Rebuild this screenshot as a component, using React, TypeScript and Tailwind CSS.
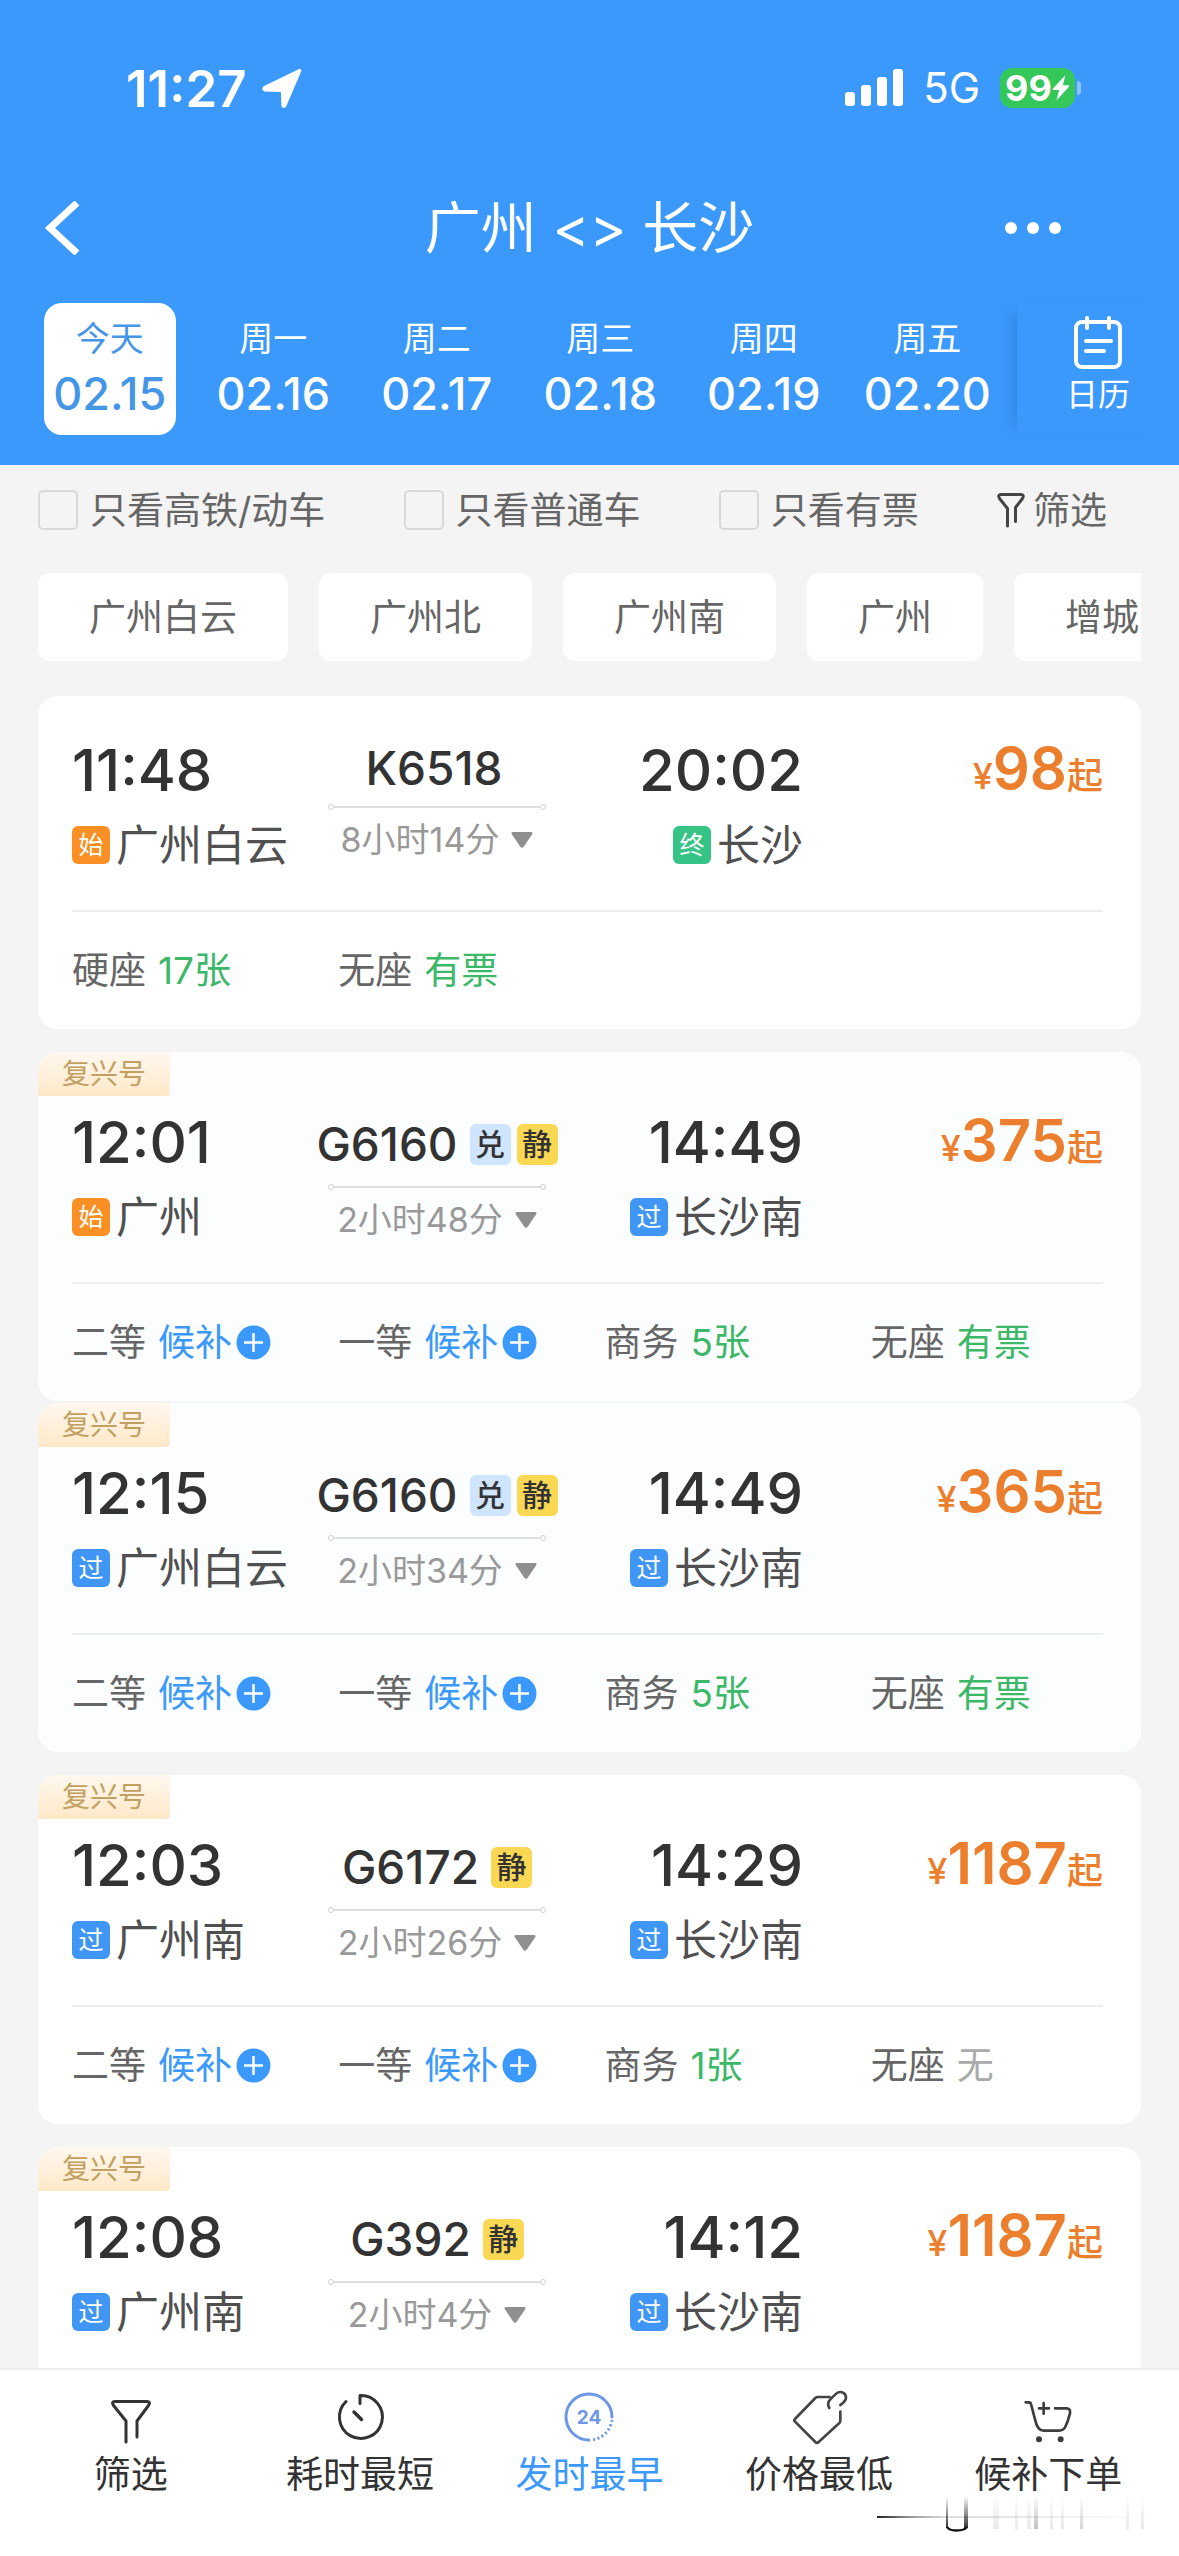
import React, { useState } from 'react';

type StationKind = 'start' | 'pass' | 'end';
type SeatState = 'available' | 'waitlist' | 'none';

interface Station {
  kind: StationKind;
  name: string;
  time: string;
}

interface Seat {
  name: string;
  value: string;
  state: SeatState;
}

interface Train {
  id: string;
  number: string;
  fuxing: boolean;
  exchange?: boolean;
  quiet?: boolean;
  duration: string;
  from: Station;
  to: Station;
  price: number;
  seats: Seat[];
  // same train, listed again from another boarding station
  joined?: boolean;
}

const DAYS = [
  { week: '今天', date: '02.15' },
  { week: '周一', date: '02.16' },
  { week: '周二', date: '02.17' },
  { week: '周三', date: '02.18' },
  { week: '周四', date: '02.19' },
  { week: '周五', date: '02.20' },
];

const QUICK_FILTERS = ['只看高铁/动车', '只看普通车', '只看有票'];

const STATIONS = ['广州白云', '广州北', '广州南', '广州', '增城'];

const TRAINS: Train[] = [
  {
    id: 'k6518',
    number: 'K6518',
    fuxing: false,
    duration: '8小时14分',
    from: { kind: 'start', name: '广州白云', time: '11:48' },
    to: { kind: 'end', name: '长沙', time: '20:02' },
    price: 98,
    seats: [
      { name: '硬座', value: '17张', state: 'available' },
      { name: '无座', value: '有票', state: 'available' },
    ],
  },
  {
    id: 'g6160-gz',
    number: 'G6160',
    fuxing: true,
    exchange: true,
    quiet: true,
    duration: '2小时48分',
    from: { kind: 'start', name: '广州', time: '12:01' },
    to: { kind: 'pass', name: '长沙南', time: '14:49' },
    price: 375,
    seats: [
      { name: '二等', value: '候补', state: 'waitlist' },
      { name: '一等', value: '候补', state: 'waitlist' },
      { name: '商务', value: '5张', state: 'available' },
      { name: '无座', value: '有票', state: 'available' },
    ],
  },
  {
    id: 'g6160-by',
    number: 'G6160',
    fuxing: true,
    exchange: true,
    quiet: true,
    joined: true,
    duration: '2小时34分',
    from: { kind: 'pass', name: '广州白云', time: '12:15' },
    to: { kind: 'pass', name: '长沙南', time: '14:49' },
    price: 365,
    seats: [
      { name: '二等', value: '候补', state: 'waitlist' },
      { name: '一等', value: '候补', state: 'waitlist' },
      { name: '商务', value: '5张', state: 'available' },
      { name: '无座', value: '有票', state: 'available' },
    ],
  },
  {
    id: 'g6172',
    number: 'G6172',
    fuxing: true,
    quiet: true,
    duration: '2小时26分',
    from: { kind: 'pass', name: '广州南', time: '12:03' },
    to: { kind: 'pass', name: '长沙南', time: '14:29' },
    price: 1187,
    seats: [
      { name: '二等', value: '候补', state: 'waitlist' },
      { name: '一等', value: '候补', state: 'waitlist' },
      { name: '商务', value: '1张', state: 'available' },
      { name: '无座', value: '无', state: 'none' },
    ],
  },
  {
    id: 'g392',
    number: 'G392',
    fuxing: true,
    quiet: true,
    duration: '2小时4分',
    from: { kind: 'pass', name: '广州南', time: '12:08' },
    to: { kind: 'pass', name: '长沙南', time: '14:12' },
    price: 1187,
    seats: [],
  },
];

const STATION_BADGE: Record<StationKind, { label: string; className: string }> = {
  start: { label: '始', className: 'bg-[#fa8f24]' },
  pass: { label: '过', className: 'bg-[#3f96f5]' },
  end: { label: '终', className: 'bg-[#36c486]' },
};

const SEAT_COLOR: Record<SeatState, string> = {
  available: 'text-[#3cb868]',
  waitlist: 'text-[#3b99fc]',
  none: 'text-[#aaaaaa]',
};

/* ---------- icons ---------- */

const LocationIcon = () => (
  <svg className="h-10 w-[42px]" viewBox="0 0 44 42" fill="#fff" aria-hidden="true">
    <path d="M39.500 1.200 3.200 19c-3 1.600-2.200 5.600 1.200 5.700l15 .4c1 0 1.500.5 1.500 1.500l.4 12.400c.2 3.400 4 3.800 5.300.9L42 4c1-2.200-.6-3.700-2.500-2.800Z" />
  </svg>
);

const SignalIcon = () => (
  <svg className="h-[38px] w-[58px]" viewBox="0 0 58 38" fill="#fff" aria-hidden="true">
    <rect x="0" y="23" width="10" height="14" rx="3" />
    <rect x="16" y="16" width="10" height="21" rx="3" />
    <rect x="32" y="8" width="10" height="29" rx="3" />
    <rect x="48" y="0" width="10" height="37" rx="3" />
  </svg>
);

const BoltIcon = () => (
  <svg className="h-[26px] w-[18px]" viewBox="0 0 18 26" fill="#fff" aria-hidden="true">
    <path d="M13.500 0 1 13.500c-.7.8-.3 1.500.6 1.500h5.600L4.400 25.500 17 11.800c.7-.8.3-1.500-.6-1.500h-5.600Z" />
  </svg>
);

const CalendarIcon = () => (
  <svg className="h-14 w-[50px]" viewBox="0 0 50 56" fill="none" stroke="#fff" strokeWidth="4" strokeLinecap="round" aria-hidden="true">
    <rect x="3" y="7" width="44" height="45" rx="6" />
    <path d="M14 3v10M36 3v10M13 26h25M13 36h18" />
  </svg>
);

const FunnelIcon = () => (
  <svg className="h-9 w-7" viewBox="0 0 28 36" fill="none" stroke="#444" strokeWidth="3" strokeLinecap="round" strokeLinejoin="round" aria-hidden="true">
    <path d="M10.500 34V16.500L2.500 6.500Q0.500 2.500 4 2.500H24Q27.500 2.500 25.500 6.500L18.500 15.500V29.500" />
  </svg>
);

const NavFunnelIcon = () => (
  <svg className="h-[58px] w-[58px]" viewBox="0 0 58 58" fill="none" stroke="#333" strokeWidth="3" strokeLinecap="round" strokeLinejoin="round" aria-hidden="true">
    <path d="M24 54V33L11.500 17.500Q9 13.500 13 13.500H45Q49 13.500 46.500 17.500L35 33V49" />
  </svg>
);

const NavTimerIcon = () => (
  <svg className="h-[58px] w-[58px]" viewBox="0 0 58 58" fill="none" stroke="#333" strokeWidth="3" strokeLinecap="round" strokeLinejoin="round" aria-hidden="true">
    <path d="M29 15.500V7.500A21.500 21.500 0 1 1 15 13.500" />
    <path d="M23 24l7.500 7.500" strokeWidth="3.500" />
  </svg>
);

const NavClock24Icon = () => (
  <svg className="h-[58px] w-[58px]" viewBox="0 0 58 58" fill="none" stroke="#6d98e6" strokeWidth="3" aria-hidden="true">
    <path d="M29 52A23 23 0 1 1 52 29" strokeLinecap="round" />
    <path d="M52 32A23 23 0 0 1 31 52" strokeDasharray="2 2.500" />
    <text x="29" y="36" textAnchor="middle" fill="#6d98e6" stroke="none" fontSize="19" fontWeight="700">24</text>
  </svg>
);

const NavTagIcon = () => (
  <svg className="h-[58px] w-[58px]" viewBox="747 22 174 174" fill="none" stroke="#444" strokeWidth="8" strokeLinecap="round" strokeLinejoin="round" aria-hidden="true">
    <path d="M866 49H830Q826 49 823 52L762 115Q758 119 762 123L823 184Q828 189 833 184L895 127Q898 124 898 120V93" />
    <path d="M865 82C859 73 862 62 870 54L883 41C895 28 914 35 915 50C915 60 906 68 898 73" />
  </svg>
);

const NavCartIcon = () => (
  <svg className="h-[58px] w-[58px]" viewBox="478 24 174 174" fill="none" stroke="#3c3c3c" strokeWidth="8" strokeLinecap="round" strokeLinejoin="round" aria-hidden="true">
    <path d="M498 67H508Q513 67 514 72L527 122Q534 152 551 152H595Q610 152 616 142Q625 125 631 100Q633 86 622 85H586" />
    <path d="M552 69v32M538 85h30" />
    <circle cx="538" cy="178" r="5" fill="#3c3c3c" />
    <circle cx="603" cy="178" r="5" fill="#3c3c3c" />
  </svg>
);

const PlusBadge = () => (
  <svg className="h-[35px] w-[35px]" viewBox="0 0 35 35" aria-hidden="true">
    <circle cx="17.500" cy="17.500" r="17" fill="#3b99fc" />
    <path d="M17.500 8v19M8 17.500h19" stroke="#fff" strokeWidth="2.500" />
  </svg>
);

// faint streaks over the lower right of the tab bar
const Streaks = () => (
  <svg className="pointer-events-none absolute right-4 bottom-6 h-9 w-72" viewBox="0 0 288 36" aria-hidden="true">
    <defs>
      <linearGradient id="streak-h" x1="0" x2="1" y1="0" y2="0">
        <stop offset="0" stopColor="#222" />
        <stop offset="0.12" stopColor="#999" />
        <stop offset="0.25" stopColor="#ddd" />
        <stop offset="1" stopColor="#fff" />
      </linearGradient>
      <linearGradient id="streak-v" x1="0" x2="0" y1="0" y2="1">
        <stop offset="0" stopColor="#000" stopOpacity="0" />
        <stop offset="1" stopColor="#000" stopOpacity="0.800" />
      </linearGradient>
    </defs>
    <rect x="2" y="20" width="276" height="2" fill="url(#streak-h)" />
    <rect x="71" y="0" width="2" height="32" fill="url(#streak-v)" />
    <rect x="89" y="0" width="4" height="32" fill="url(#streak-v)" />
    <path d="M72 31Q74 34.500 81 34.500Q90 34.500 92 31" fill="none" stroke="#111" strokeWidth="2.500" />
    <g fill="url(#streak-v)" opacity="0.100">
      <rect x="118" y="0" width="6" height="33" />
      <rect x="140" y="0" width="3" height="33" />
      <rect x="152" y="0" width="4" height="33" />
      <rect x="175" y="0" width="3" height="33" />
      <rect x="186" y="0" width="3" height="33" />
      <rect x="251" y="0" width="3" height="33" />
      <rect x="266" y="0" width="3" height="33" />
    </g>
    <rect x="159" y="0" width="4" height="33" fill="url(#streak-v)" opacity="0.300" />
    <rect x="205" y="0" width="3" height="33" fill="url(#streak-v)" opacity="0.200" />
  </svg>
);

/* ---------- list ---------- */

const StationLabel: React.FC<{ station: Station }> = ({ station }) => {
  const badge = STATION_BADGE[station.kind];
  return (
    <div className="flex h-[50px] items-center gap-1.5 whitespace-nowrap">
      <span className={`flex h-[38px] w-[38px] shrink-0 items-center justify-center rounded-md text-[25px] leading-none text-white ${badge.className}`}>
        {badge.label}
      </span>
      <span className="text-[43px] leading-[50px] text-[#505050]">{station.name}</span>
    </div>
  );
};

const TrainCard: React.FC<{ train: Train }> = ({ train }) => {
  const { from, to } = train;
  return (
    <article className={`shrink-0 overflow-hidden rounded-[20px] ${train.exchange ? 'bg-[#fcfdfe]' : 'bg-white'} ${train.joined ? 'mt-0.5' : 'mt-[23px] first:mt-0'}`}>
      {train.fuxing && (
        <div className="flex h-11 w-[132px] items-center justify-center rounded-br-sm bg-linear-to-b from-[#fff8ef] to-[#ffe8c8] text-[28px] leading-none text-[#c2a062]">
          复兴号
        </div>
      )}
      <div className={`mr-[38px] ml-[34px] grid grid-cols-[232fr_266fr_233fr_300fr] border-b-2 border-[#eeeeee] pb-10 ${train.fuxing ? 'pt-3' : 'pt-10'}`}>
        <div className="flex flex-col gap-4">
          <time className="text-[58px] leading-[68px] font-medium text-[#333]">{from.time}</time>
          <StationLabel station={from} />
        </div>
        <div className="flex flex-col items-center">
          <div className={`flex items-center gap-1.5 ${train.fuxing ? 'h-[72px]' : 'h-16'}`}>
            <h2 className="mr-1.5 text-[46px] leading-none font-medium text-[#333]">{train.number}</h2>
            {train.exchange && (
              <span className="flex h-[41px] w-[41px] items-center justify-center rounded-md bg-[#cfe4fe] text-[30px] leading-none font-medium text-[#333]">兑</span>
            )}
            {train.quiet && (
              <span className="flex h-[41px] w-[41px] items-center justify-center rounded-md bg-[#fbd853] text-[30px] leading-none font-medium text-[#333]">静</span>
            )}
          </div>
          <div className="mt-1 mb-2 flex w-[218px] items-center">
            <span className="h-1.5 w-1.5 rounded-full border border-[#cfcfcf]" />
            <span className="h-0.5 flex-1 bg-[#dfdfdf]" />
            <span className="h-1.5 w-1.5 rounded-full border border-[#cfcfcf]" />
          </div>
          <button type="button" className="flex h-11 items-center gap-3 text-[34px] leading-none whitespace-nowrap text-[#999]">
            {train.duration}
            <svg className="h-4 w-[22px]" viewBox="0 0 22 16" fill="#8f8f8f" aria-hidden="true">
              <path d="M2 0H20Q22.500 0 21 2.500L12.500 15Q11 16.500 9.500 15L1 2.500Q-.5 0 2 0Z" />
            </svg>
          </button>
        </div>
        <div className="flex flex-col items-end gap-4">
          <time className="text-[58px] leading-[68px] font-medium text-[#333]">{to.time}</time>
          <StationLabel station={to} />
        </div>
        <p className="text-right text-[58px] leading-[64px] font-semibold text-[#ec7f2e]">
          <span className="text-[36px] font-medium">¥</span>
          {train.price}
          <span className="text-[36px] font-medium">起</span>
        </p>
      </div>
      <ul className="grid grid-cols-4 pt-[30px] pr-1 pb-[31px] pl-[34px]">
        {train.seats.map(seat => (
          <li key={seat.name} className="flex h-14 items-center text-[37px] leading-none text-[#666]">
            {seat.name}
            {seat.state === 'waitlist' ? (
              <button type="button" className={`ml-3 flex items-center gap-1 ${SEAT_COLOR[seat.state]}`}>
                {seat.value}
                <PlusBadge />
              </button>
            ) : (
              <span className={`ml-3 ${SEAT_COLOR[seat.state]}`}>{seat.value}</span>
            )}
          </li>
        ))}
      </ul>
    </article>
  );
};

const NAV_ITEMS = [
  { label: '筛选', Icon: NavFunnelIcon },
  { label: '耗时最短', Icon: NavTimerIcon },
  { label: '发时最早', Icon: NavClock24Icon },
  { label: '价格最低', Icon: NavTagIcon },
  { label: '候补下单', Icon: NavCartIcon },
];

const App: React.FC = () => {
  const [day, setDay] = useState('02.15');
  const [sort, setSort] = useState('发时最早');

  return (
    <div className="flex h-screen flex-col overflow-hidden bg-[#f4f4f4] font-['Inter','Noto_Sans_CJK_SC',sans-serif]">
      <header className="shrink-0 bg-[#3b99fc] pb-[30px] text-white">
        <div className="flex h-[174px] items-center justify-between pt-0.5 pr-[98px] pl-[126px]">
          <div className="flex items-center gap-3.5 text-[51px] leading-none font-semibold">
            11:27
            <LocationIcon />
          </div>
          <div className="flex items-center">
            <SignalIcon />
            <span className="ml-5 text-[42px] leading-none">5G</span>
            <span className="ml-5 flex h-10 w-[75px] items-center justify-center rounded-xl bg-[#34c759] text-[36px] leading-none font-bold">
              99
              <BoltIcon />
            </span>
            <span className="ml-0.5 h-3.5 w-1 rounded-r-full bg-white/40" />
          </div>
        </div>

        <div className="grid h-[108px] grid-cols-[1fr_auto_1fr] items-center pr-[118px] pl-11">
          <button type="button" aria-label="返回" className="w-fit">
            <svg className="h-[54px] w-9" viewBox="0 0 36 54" fill="none" stroke="#fff" strokeWidth="7" aria-hidden="true">
              <path d="M33 2 6 27l27 25" />
            </svg>
          </button>
          <h1 className="pl-[74px] text-[56px] leading-none">广州 &lt;&gt; 长沙</h1>
          <button type="button" aria-label="更多" className="flex w-fit gap-2.5 justify-self-end">
            <span className="h-3 w-3 rounded-full bg-white" />
            <span className="h-3 w-3 rounded-full bg-white" />
            <span className="h-3 w-3 rounded-full bg-white" />
          </button>
        </div>

        <div className="mt-[21px] flex pl-7">
          {DAYS.map(d => (
            <div key={d.date} className="flex-1 px-4">
              <button
                type="button"
                onClick={() => setDay(d.date)}
                className={`flex h-[132px] w-full flex-col items-center gap-2.5 rounded-[18px] pt-4 ${day === d.date ? 'bg-white text-[#4596e6]' : 'text-white'}`}
              >
                <span className="text-[34px] leading-10">{d.week}</span>
                <span className="text-[45px] leading-[50px] font-medium">{d.date}</span>
              </button>
            </div>
          ))}
          <button type="button" className="ml-2 flex h-[132px] w-[162px] flex-col items-center pt-3 shadow-[-14px_0_14px_-10px_rgba(0,60,140,0.22)]">
            <CalendarIcon />
            <span className="mt-1 text-[32px] leading-10">日历</span>
          </button>
        </div>
      </header>

      <div className="shrink-0 px-[38px]">
        <div className="flex h-[90px] items-center justify-between pr-[34px] text-[37px] leading-none text-[#666]">
          {QUICK_FILTERS.map(label => (
            <label key={label} className="flex items-center gap-3">
              <input type="checkbox" className="h-10 w-10 appearance-none rounded-[5px] border-2 border-[#d9d9d9] checked:border-[#3b99fc] checked:bg-[#3b99fc]" />
              {label}
            </label>
          ))}
          <button type="button" className="flex items-center gap-2">
            <FunnelIcon />
            筛选
          </button>
        </div>
        <div className="mt-[18px] mb-[35px] flex gap-[31px] overflow-hidden">
          {STATIONS.map(name => (
            <button key={name} type="button" className="h-[88px] shrink-0 rounded-xl bg-white px-[51px] text-[37px] leading-none text-[#666]">
              {name}
            </button>
          ))}
        </div>
      </div>

      <main className="flex min-h-0 flex-1 flex-col overflow-y-auto px-[38px] [scrollbar-width:none]">
        {TRAINS.map(train => (
          <TrainCard key={train.id} train={train} />
        ))}
      </main>

      <nav className="relative grid h-[188px] shrink-0 grid-cols-5 border-t-2 border-[#ececec] bg-white px-4 pt-[18px]">
        {NAV_ITEMS.map(({ label, Icon }) => (
          <button
            key={label}
            type="button"
            onClick={() => setSort(label)}
            className={`flex flex-col items-center text-[37px] leading-[58px] ${sort === label ? 'text-[#3b99fc]' : 'text-[#333]'}`}
          >
            <Icon />
            {label}
          </button>
        ))}
        <Streaks />
      </nav>
    </div>
  );
};

export default App;
